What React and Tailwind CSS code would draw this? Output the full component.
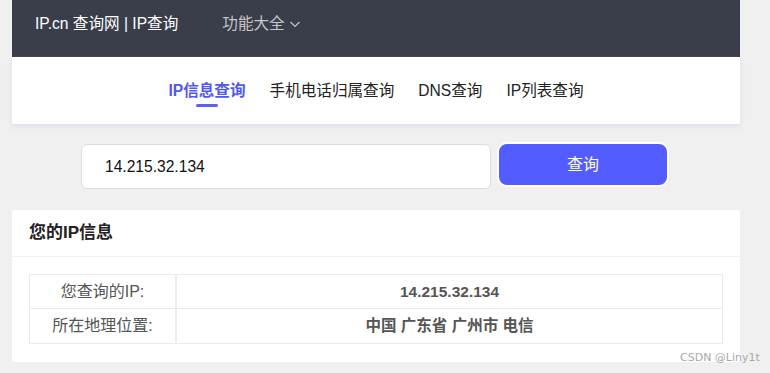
import React from "react";

const font = { fontFamily: '"Liberation Sans", "Noto Sans CJK SC", sans-serif' };

export default function App() {
  return (
    <div className="relative w-[770px] h-[373px] bg-[#f0f0f0] overflow-hidden" style={font}>
      <div className="ml-[12px] w-[728px]">
        <div className="h-[57px] bg-[#3a3d4a] flex items-start pl-[23px] pt-[12px]">
          <span className="text-white text-[15.6px]">IP.cn 查询网 | IP查询</span>
          <span className="ml-[44px] text-[15.6px] text-[#c4c6cc] flex items-center">
            功能大全
            <svg width="12" height="12" viewBox="0 0 12 12" className="ml-[4px]" fill="none" stroke="#c4c6cc" strokeWidth="1.2">
              <path d="M1.5 4l4.5 4.5L10.5 4" />
            </svg>
          </span>
        </div>
        <div className="h-[67px] bg-white flex justify-center items-start pt-[22px] gap-[24px] text-[15.6px] text-[#222] shadow-[0_2px_4px_rgba(200,205,230,0.5)]">
          <div className="flex flex-col items-center">
            <span className="text-[#5058f0] font-bold">IP信息查询</span>
            <span className="mt-[2px] w-[22px] h-[3px] rounded-full bg-[#5b63f5]"></span>
          </div>
          <span>手机电话归属查询</span>
          <span>DNS查询</span>
          <span>IP列表查询</span>
        </div>
      </div>
      <div className="flex justify-center items-start mt-[18px] gap-[6px] pr-[20px]">
        <div className="w-[410px] h-[45px] mt-[2px] bg-white border border-[#dcdde3] rounded-[6px] flex items-center pl-[23px] text-[15.6px] text-[#111]">
          14.215.32.134
        </div>
        <div className="w-[172px] h-[45px] bg-[#525cff] border-2 border-white rounded-[10px] flex items-center justify-center text-white text-[16px]">
          查询
        </div>
      </div>
      <div className="ml-[12px] w-[728px] mt-[21px] bg-white rounded-[2px] pb-[18px]">
        <div className="h-[47px] flex items-center pl-[17px] border-b border-[#f0f0f0] text-[17px] font-bold text-[#222]">
          您的IP信息
        </div>
        <div className="mx-[17px] mt-[17px] border border-[#ebebeb] text-[15.5px]">
          <div className="flex h-[34px] border-b border-[#ebebeb]">
            <div className="w-[147px] border-r-2 border-[#ebebeb] flex items-center justify-center text-[#555] text-[16px]">您查询的IP:</div>
            <div className="flex-1 flex items-center justify-center font-bold text-[#555]">14.215.32.134</div>
          </div>
          <div className="flex h-[34px]">
            <div className="w-[147px] border-r-2 border-[#ebebeb] flex items-center justify-center text-[#555] text-[16px]">所在地理位置:</div>
            <div className="flex-1 flex items-center justify-center font-bold text-[#555]">中国 广东省 广州市 电信</div>
          </div>
        </div>
      </div>
      <div className="absolute left-[680px] top-[350px] text-[#a8a8a8]" style={{ fontFamily: '"DejaVu Sans", sans-serif', fontSize: 11 }}>
        CSDN @Liny1t
      </div>
    </div>
  );
}
